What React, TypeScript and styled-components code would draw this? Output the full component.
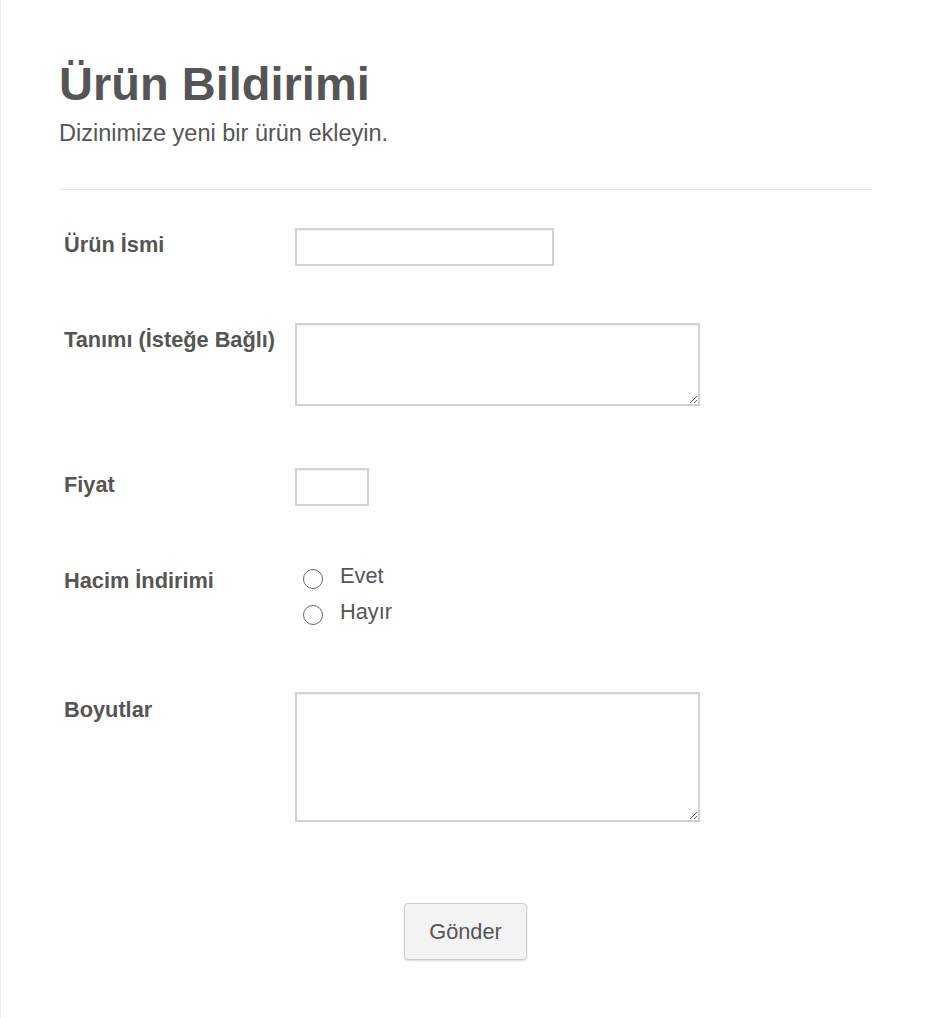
import * as React from 'react';
import styled, { createGlobalStyle } from 'styled-components';

const GlobalStyle = createGlobalStyle`
  html, body {
    margin: 0;
    padding: 0;
    background: #fff;
  }
  body {
    font-family: "Liberation Sans", Arial, sans-serif;
    color: #555;
  }
`;

const Page = styled.div`
  box-sizing: border-box;
  min-height: 1018px;
  padding: 56px 58px 40px 58px;
  border-left: 1px solid #ececec;
`;

const Title = styled.h1`
  margin: 0;
  font-size: 47px;
  line-height: 55px;
  font-weight: bold;
  color: #555;
`;

const Subtitle = styled.div`
  margin-top: 8px;
  font-size: 23.5px;
  line-height: 28px;
  color: #555;
`;

const Divider = styled.hr`
  margin: 42px 0 38px;
  border: none;
  border-top: 1px solid #e6e6e6;
  height: 0;
`;

const Row = styled.div<{ $gap: number }>`
  display: grid;
  grid-template-columns: 236px 1fr;
  align-items: start;
  margin-bottom: ${p => p.$gap}px;
`;

const Label = styled.label<{ $top?: number }>`
  padding-left: 5px;
  padding-top: ${p => p.$top ?? 4}px;
  font-size: 21.75px;
  line-height: 26px;
  font-weight: bold;
  color: #555;
`;

const TextInput = styled.input<{ $w: number }>`
  display: block;
  box-sizing: border-box;
  width: ${p => p.$w}px;
  height: 38px;
  margin: 0;
  border: 2px solid #d2d2d2;
  box-shadow: inset 0 1px 1px #eee;
  background: #fff;
  outline: none;
`;

const TextArea = styled.textarea<{ $h: number }>`
  display: block;
  box-sizing: border-box;
  width: 405px;
  height: ${p => p.$h}px;
  margin: 0;
  border: 2px solid #d2d2d2;
  box-shadow: inset 0 1px 1px #eee;
  background: #fff;
  outline: none;
  resize: both;
`;

const RadioList = styled.div`
  display: flex;
  flex-direction: column;
`;

const RadioItem = styled.label`
  display: flex;
  align-items: center;
  height: 36px;
  padding-left: 8px;
  font-size: 21.75px;
  color: #555;
`;

const Circle = styled.span`
  box-sizing: border-box;
  width: 20px;
  height: 20px;
  margin-top: 5px;
  margin-right: 17px;
  border: 1.5px solid #666;
  border-radius: 50%;
  background: #fff;
`;

const Actions = styled.div`
  display: flex;
  justify-content: center;
`;

const SubmitButton = styled.button`
  box-sizing: border-box;
  width: 123px;
  height: 57px;
  border: 1px solid #ccc;
  border-radius: 4px;
  background: #f3f3f3;
  box-shadow: 0 1px 2px rgba(0, 0, 0, 0.15);
  font-family: "Liberation Sans", Arial, sans-serif;
  font-size: 21.75px;
  color: #555;
  cursor: pointer;
`;

export default function App() {
  return (
    <>
      <GlobalStyle />
      <Page>
        <Title>Ürün Bildirimi</Title>
        <Subtitle>Dizinimize yeni bir ürün ekleyin.</Subtitle>
        <Divider />

        <Row $gap={57}>
          <Label>Ürün İsmi</Label>
          <TextInput $w={259} type="text" />
        </Row>

        <Row $gap={62}>
          <Label>Tanımı (İsteğe Bağlı)</Label>
          <TextArea $h={83} />
        </Row>

        <Row $gap={52}>
          <Label>Fiyat</Label>
          <TextInput $w={74} type="text" />
        </Row>

        <Row $gap={62}>
          <Label $top={10}>Hacim İndirimi</Label>
          <RadioList>
            <RadioItem><Circle />Evet</RadioItem>
            <RadioItem><Circle />Hayır</RadioItem>
          </RadioList>
        </Row>

        <Row $gap={81}>
          <Label $top={5}>Boyutlar</Label>
          <TextArea $h={130} />
        </Row>

        <Actions>
          <SubmitButton type="button">Gönder</SubmitButton>
        </Actions>
      </Page>
    </>
  );
}
